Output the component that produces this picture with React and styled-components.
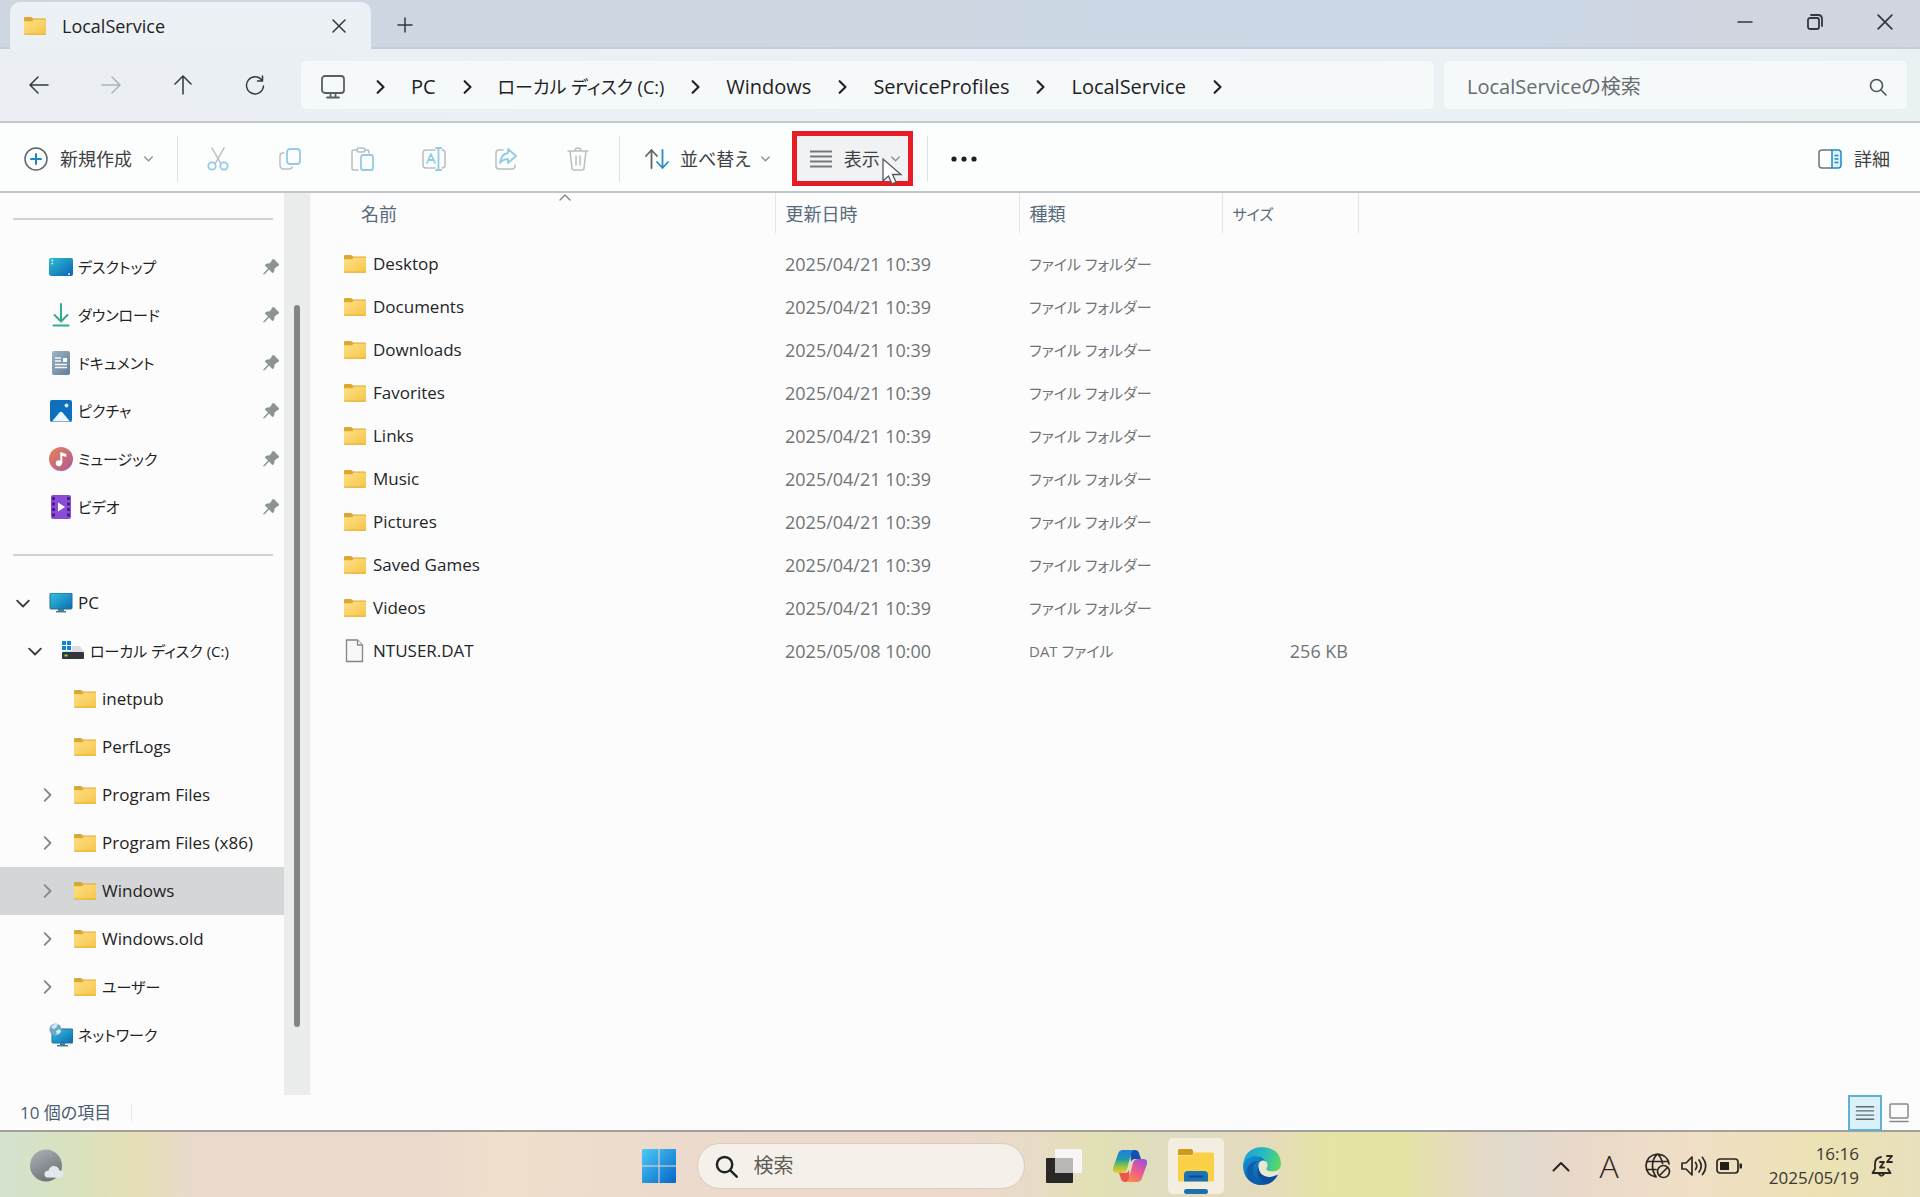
import React from "react";
import styled, { createGlobalStyle } from "styled-components";

const GlobalStyle = createGlobalStyle`
  * { box-sizing: border-box; }
  html, body { margin: 0; padding: 0; }
  body {
    font-family: "Open Sans", "Noto Sans CJK JP", sans-serif;
    font-feature-settings: "palt";
    color: #1f2224;
    background: #fcfcfc;
  }
  button, input {
    font: inherit;
    font-feature-settings: inherit;
    color: inherit;
    margin: 0;
    padding: 0;
    border: 0;
    background: none;
  }
  svg { display: block; flex: none; }
`;

/* ---------- icons ---------- */

const Stroke = ({ w = 24, h = w, box = `0 0 ${w} ${h}`, sw = 1.5, color = "currentColor", children }) => (
  <svg width={w} height={h} viewBox={box} fill="none" stroke={color} strokeWidth={sw} strokeLinecap="round" strokeLinejoin="round" aria-hidden="true">
    {children}
  </svg>
);

const Folder = ({ w = 24, h = 18 }) => (
  <svg width={w} height={h} viewBox="0 0 24 18" aria-hidden="true">
    <defs>
      <linearGradient id="folderFront" x1="0" y1="0" x2="1" y2="1">
        <stop offset="0" stopColor="#fee18a" />
        <stop offset="1" stopColor="#f6c445" />
      </linearGradient>
    </defs>
    <path d="M1 1.2Q1 0 2.2 0H8l2 1.500h12q1 0 1 1v3H1z" fill="#dba72f" />
    <path d="M1 4.200h8.2L10.600 2.400H22q1 0 1 1V17q0 1-1 1H2q-1 0-1-1z" fill="url(#folderFront)" />
    <path d="M1 16.200h22v.8q0 1-1 1H2q-1 0-1-1z" fill="#e5b23c" opacity=".6" />
  </svg>
);

const FileIcon = () => (
  <svg width="24" height="24" viewBox="0 0 24 24" fill="#f8f8f8" stroke="#858585" strokeWidth="1.300" strokeLinejoin="round" aria-hidden="true">
    <path d="M3.500 1h11l5 5v16.500h-16z" />
    <path d="M14.500 1v5h5" />
  </svg>
);

const DesktopIcon = () => (
  <svg width="24" height="20" viewBox="0 0 24 20" aria-hidden="true">
    <defs>
      <linearGradient id="desk" x1="0" y1="0" x2="1" y2="1">
        <stop offset="0" stopColor="#2fbfd0" />
        <stop offset="1" stopColor="#0a62b8" />
      </linearGradient>
    </defs>
    <rect y="1" width="24" height="18" rx="2" fill="url(#desk)" />
    <path d="M2.500 3.500h1.600M2.500 6.500h1.600M19 17h2" stroke="#d8f5fb" strokeWidth="1.500" />
  </svg>
);

const DownloadIcon = () => (
  <Stroke w={24} sw={2} color="#35ab93">
    <path d="M12 1v17M5.500 12l6.500 6.500L18.500 12M4.500 22.500h15" />
  </Stroke>
);

const DocumentIcon = () => (
  <svg width="24" height="24" viewBox="0 0 24 24" aria-hidden="true">
    <defs>
      <linearGradient id="doc" x1="0" y1="0" x2="1" y2="1">
        <stop offset="0" stopColor="#9db4c6" />
        <stop offset="1" stopColor="#657e98" />
      </linearGradient>
    </defs>
    <rect x="3" width="18" height="24" rx="2" fill="url(#doc)" />
    <path d="M6 7h6M6 10h6M6 13.500h12M6 16.500h12" stroke="#f2f6fa" strokeWidth="1.300" />
    <rect x="14" y="7" width="4" height="4" fill="#fff" />
  </svg>
);

const PictureIcon = () => (
  <svg width="24" height="24" viewBox="0 0 24 24" aria-hidden="true">
    <rect x="1" y="1" width="22" height="22" rx="2" fill="#0d6fbd" />
    <path d="M3 22.500l7.500-9q1.500-1.700 3 0l7.500 9z" fill="#eef7fd" />
    <circle cx="17.500" cy="6.500" r="2" fill="#c9e8fb" />
  </svg>
);

const MusicIcon = () => (
  <svg width="24" height="24" viewBox="0 0 24 24" aria-hidden="true">
    <defs>
      <linearGradient id="music" x1="0" y1="0" x2="1" y2="1">
        <stop offset="0" stopColor="#e58455" />
        <stop offset="1" stopColor="#b0579a" />
      </linearGradient>
    </defs>
    <circle cx="12" cy="12" r="12" fill="url(#music)" />
    <circle cx="9.800" cy="16.300" r="3" fill="#fff" />
    <path d="M11.300 16.500V5l6 2v3l-4-1.200v7.700z" fill="#fff" />
  </svg>
);

const VideoIcon = () => (
  <svg width="24" height="24" viewBox="0 0 24 24" aria-hidden="true">
    <rect x="2" width="20" height="24" rx="2" fill="#8b4bd6" />
    <path d="M4.500 2v20M19.500 2v20" stroke="#3b1a77" strokeWidth="2.600" strokeDasharray="3 2.500" />
    <path d="M9 7.500l7 4.500-7 4.500z" fill="#fff" />
  </svg>
);

const PcIcon = () => (
  <svg width="24" height="20" viewBox="0 0 24 20" aria-hidden="true">
    <defs>
      <linearGradient id="pc" x1="0" y1="0" x2="1" y2="1">
        <stop offset="0" stopColor="#35c3dc" />
        <stop offset="1" stopColor="#0a6cb4" />
      </linearGradient>
    </defs>
    <rect x="1" width="22" height="16" rx="1" fill="url(#pc)" stroke="#1f6f96" />
    <path d="M9 16h6v2H9zM7 18h10v1.500H7z" fill="#4b7b93" />
  </svg>
);

const DriveIcon = () => (
  <svg width="24" height="20" viewBox="0 0 24 20" aria-hidden="true">
    <path d="M1 0h4v4H1zM6 0h4v4H6zM1 5h4v4H1zM6 5h4v4H6z" fill="#0b86d3" />
    <path d="M11 5h8l4 6H2V9.500h9z" fill="#dcdfe2" />
    <rect x="1" y="11" width="22" height="7" rx="1" fill="#33373b" />
    <rect x="3.500" y="13.500" width="3" height="2" fill="#7fe04a" />
  </svg>
);

const NetworkIcon = () => (
  <svg width="24" height="24" viewBox="0 0 24 24" aria-hidden="true">
    <rect x="3" y="6" width="21" height="14" rx="1" fill="url(#pc)" stroke="#1f6f96" />
    <path d="M11 20h5v2h-5zM8 22h11v1.500H8z" fill="#4b7b93" />
    <circle cx="6.500" cy="6.500" r="6" fill="#6aa9c9" />
    <path d="M2 4q3-4 7-3l-2 4-3 1zM7 8l4-2 1 3-4 3z" fill="#d4e8f0" />
  </svg>
);

const PinIcon = () => (
  <svg width="16" height="16" viewBox="0 0 16 16" aria-hidden="true">
    <path d="M9.600.6q.7-.7 1.400 0l4.400 4.400q.7.7 0 1.400-.8.700-1.800.8l-2.500 2.500q.4 2.600-1.400 4.200L6 10.200 1.200 15.200.5 14.800 5.400 9.600 2 6.300q1.600-1.800 4.200-1.400l2.500-2.500Q8.800 1.300 9.600.6z" fill="#8b9396" stroke="#8b9396" strokeWidth=".8" />
  </svg>
);

const Chevron = ({ dir = "right", size = 12, color, sw = 1.8 }) => {
  const d = { right: "M4 1l5 5-5 5", down: "M1 4l5 5 5-5", up: "M1 9l5-5 5 5" }[dir];
  return (
    <Stroke w={size} box="0 0 12 12" sw={sw} color={color}>
      <path d={d} />
    </Stroke>
  );
};

const CloseX = ({ size = 14 }) => (
  <Stroke w={size} box="0 0 14 14"><path d="M1 1l12 12M13 1L1 13" /></Stroke>
);

const SearchGlyph = ({ size = 18, sw = 1.6 }) => (
  <Stroke w={size} box="0 0 18 18" sw={sw}><circle cx="7.500" cy="7.500" r="6" /><path d="M12 12l5 5" /></Stroke>
);

const GREY = "#b9bec1";
const SKY = "#94cbe4";

const CutIcon = () => (
  <Stroke w={24} color={GREY}>
    <path d="M6 1l8.500 15M18 1L9.500 16" />
    <g stroke={SKY} strokeWidth="1.800"><circle cx="6" cy="19" r="3.700" /><circle cx="18" cy="19" r="3.700" /></g>
  </Stroke>
);
const CopyIcon = () => (
  <Stroke w={24} color={GREY}>
    <path d="M6 6H5Q2 6 2 9v9q0 4 4 4h5q3 0 3-2" />
    <rect x="9" y="2" width="13" height="15" rx="3" stroke={SKY} strokeWidth="1.800" />
  </Stroke>
);
const PasteIcon = () => (
  <Stroke w={24} color={GREY}>
    <path d="M7 3H4Q2 3 2 5v16q0 2 2 2h4M15 3h2q2 0 2 2v1" />
    <rect x="7" y="1" width="8" height="4" rx="2" />
    <rect x="11" y="8" width="12" height="15" rx="2" stroke={SKY} strokeWidth="1.800" />
  </Stroke>
);
const RenameIcon = () => (
  <Stroke w={24} color={GREY}>
    <path d="M13 3H4Q1 3 1 6v12q0 3 3 3h9M20 3q3 0 3 3v12q0 3-3 3" />
    <g stroke={SKY} strokeWidth="1.800"><path d="M16.500 1v22M14 1h5M14 23h5M5 16l4-9 4 9M6.500 13h5" /></g>
  </Stroke>
);
const ShareIcon = () => (
  <Stroke w={24} color={GREY}>
    <path d="M9 3H5Q2 3 2 6v13q0 3 3 3h13q3 0 3-3v-1" />
    <path d="M14 2l8 7-8 7v-4q-5 0-8 4 1-9 8-10z" stroke={SKY} strokeWidth="1.800" />
  </Stroke>
);
const TrashIcon = () => (
  <Stroke w={24} color={GREY}>
    <path d="M2 4h20M4 4l2 17q0 2 2 2h8q2 0 2-2l2-17M9 4q0-3 3-3t3 3M10 9v9M14 9v9" />
  </Stroke>
);
const NewIcon = () => (
  <Stroke w={24} color="#5e6468">
    <circle cx="12" cy="12" r="11" />
    <path d="M12 7v10M7 12h10" stroke="#1b86c6" strokeWidth="2" />
  </Stroke>
);
const SortIcon = () => (
  <Stroke w={26} h={22} sw={1.800} color="#5e6468">
    <path d="M7.500 20V2M2 8l5.500-6L13 8" />
    <path d="M18.500 2v18M13 14l5.500 6 5.500-6" stroke="#2a8fc9" />
  </Stroke>
);
const LinesIcon = ({ w = 24, color = "#74787b", sw = 1.800 }) => (
  <Stroke w={w} h={18} box="0 0 24 18" color={color} sw={sw}>
    <path d="M1 1.500h22M1 6.500h22M1 11.500h22M1 16.500h22" strokeLinecap="butt" />
  </Stroke>
);
const DetailsIcon = () => (
  <svg width="24" height="20" viewBox="0 0 24 20" fill="none" strokeWidth="1.500" aria-hidden="true">
    <path d="M14 1H4Q1 1 1 4v12q0 3 3 3h10" stroke="#6e7477" />
    <path d="M14 1h6q3 0 3 3v12q0 3-3 3h-6z" fill="#def3fc" stroke="#2189c2" />
    <path d="M16.500 6.500h4M16.500 10h4M16.500 13.500h4" stroke="#2189c2" />
  </svg>
);
const MonitorIcon = () => (
  <Stroke w={24} color="#5a5e61" sw={1.8}>
    <rect x="1" y="1" width="22" height="17" rx="3" />
    <path d="M9.500 18v4M14.500 18v4M6 22.500h12" />
  </Stroke>
);

const StartIcon = () => (
  <svg width="34" height="34" viewBox="0 0 34 34" aria-hidden="true">
    <defs>
      <linearGradient id="start" x1="0" y1="0" x2="1" y2="1" >
        <stop offset="0" stopColor="#4dc9f5" />
        <stop offset="1" stopColor="#0566c8" />
      </linearGradient>
    </defs>
    <path d="M1 0h15.500v16.500H0V1q0-1 1-1zM17.500 0H33q1 0 1 1v15.500H17.500zM0 17.500h16.500V34H1q-1 0-1-1zM17.500 17.500H34V33q0 1-1 1H17.500z" fill="url(#start)" />
  </svg>
);
const TaskViewIcon = () => (
  <svg width="36" height="34" viewBox="0 0 36 34" aria-hidden="true">
    <rect y="9" width="27" height="25" rx="1" fill="#292827" />
    <rect x="9" y="0" width="27" height="24" rx="1" fill="#f7f6f5" />
    <rect x="9" y="9" width="18" height="15" fill="#b9b8b7" />
  </svg>
);
const CopilotIcon = () => (
  <svg width="34" height="32" viewBox="0 0 34 32" aria-hidden="true">
    <defs>
      <linearGradient id="copA" x1="0" y1="0" x2="0" y2="1">
        <stop offset="0" stopColor="#1f7fe0" />
        <stop offset=".4" stopColor="#1c9aa8" />
        <stop offset=".7" stopColor="#8fc447" />
        <stop offset="1" stopColor="#f0c92f" />
      </linearGradient>
      <linearGradient id="copB" x1=".8" y1="0" x2=".2" y2="1">
        <stop offset="0" stopColor="#9a52dd" />
        <stop offset=".5" stopColor="#ee5a8e" />
        <stop offset="1" stopColor="#f9913d" />
      </linearGradient>
    </defs>
    <path d="M17 0h5q3 0 4 3l2 6h-6q-3 0-4 3z" fill="#1550b0" />
    <path d="M17 32h-5q-3 0-4-3l-2-6h6q3 0 4-3z" fill="#ef5350" />
    <path d="M10 0h12q-3 0-4 4l-4 15q-1 4-5 4H4q-5 0-4-5L5 4q1-4 5-4z" fill="url(#copA)" />
    <path d="M24 32H12q3 0 4-4l4-15q1-4 5-4h5q5 0 4 5l-5 14q-1 4-5 4z" fill="url(#copB)" />
  </svg>
);
const ExplorerIcon = () => (
  <svg width="36" height="34" viewBox="0 0 36 34" aria-hidden="true">
    <path d="M0 1.500Q0 0 1.500 0H13q2 0 2 2v4H0z" fill="#cf9a1c" />
    <path d="M0 6.500h13l3-3h18.500Q36 3.500 36 5v26q0 1.500-1.500 1.500h-33Q0 32.500 0 31z" fill="#fad046" />
    <path d="M6 32.500V26q0-4 4-4h16q4 0 4 4v6.500z" fill="#1a72b8" />
    <path d="M11 27.500h14" stroke="#0b4a8c" strokeWidth="2" />
  </svg>
);
const EdgeIcon = () => (
  <svg width="38" height="38" viewBox="0 0 38 38" aria-hidden="true">
    <defs>
      <linearGradient id="edgeTop" x1="0" y1=".3" x2="1" y2=".5">
        <stop offset="0" stopColor="#1a9fdc" />
        <stop offset=".6" stopColor="#2cc0b4" />
        <stop offset="1" stopColor="#5bd860" />
      </linearGradient>
      <linearGradient id="edgeLow" x1="0" y1="0" x2=".7" y2="1">
        <stop offset="0" stopColor="#1594dc" />
        <stop offset="1" stopColor="#0c4e9d" />
      </linearGradient>
    </defs>
    <path d="M0 19Q1 1 19 0q18 1 19 16 0 8-8 8.500h-9L12 12z" fill="url(#edgeTop)" />
    <path d="M0 19q3-10 12-10 8 0 11 6l1 14 11-1q-6 10-16 10Q1 37 0 19z" fill="url(#edgeLow)" />
    <path d="M15 14q-6 4-5 11 2 10 11 13-10 1-15-6-5-9 1-15 3-3 8-3z" fill="#0e5eab" />
    <path d="M15.500 20q-.5-5.500 4-6.500 5 0 5 4.500 0 2-1 3.500 0 2.500 4 3 5 .5 8-1-1 4-1.500 5-5 2.500-10 1.500-8-2-8.500-10z" fill="#ece6d2" />
    <path d="M15.500 20q0 7 7 9.500 6 1.500 12-2-5 8-13 8-9-5-6-15.500z" fill="#0c4e9d" />
  </svg>
);
const WeatherIcon = () => (
  <svg width="34" height="34" viewBox="0 0 34 34" aria-hidden="true">
    <defs>
      <linearGradient id="moon" x1="0" y1="0" x2=".5" y2="1">
        <stop offset="0" stopColor="#b0b3b6" />
        <stop offset="1" stopColor="#6f757b" />
      </linearGradient>
    </defs>
    <circle cx="16" cy="16.500" r="16" fill="url(#moon)" />
    <path d="M17 28.500q-3-1-2.500-4 .7-3 4-3 1.500-5 6-4.500 4 .5 5 4.500 4 .5 4 4-.3 3-4 3.200z" fill="#e4e8ec" />
  </svg>
);
const GlobeIcon = () => (
  <Stroke w={26} box="0 0 26 26" sw={1.7}>
    <path d="M11 24Q1 22 1 12.500 2 2 12.500 1 23 2 24 11M2.500 8.500h20.500M2 16.500h9M11 23.500Q7.500 19 7.500 12.500T12 1.500M13 1.500q4 4 4.500 9" />
    <circle cx="18.500" cy="18.500" r="6" /><path d="M14.500 22.500l8-8" />
  </Stroke>
);
const SpeakerIcon = () => (
  <Stroke w={26} h={22} sw={1.7}>
    <path d="M1 8h4l6-6v18l-6-6H1zM14.500 7.500q2.500 3.500 0 7M18 5q4.500 6 0 12M21.500 2.500q6.500 8.500 0 17" />
  </Stroke>
);
const BatteryIcon = () => (
  <svg width="26" height="16" viewBox="0 0 26 16" aria-hidden="true">
    <rect x="1" y="1" width="21" height="14" rx="3" fill="none" stroke="#2b2722" strokeWidth="1.700" />
    <rect x="4" y="4" width="9" height="8" fill="#221f1b" />
    <path d="M23.500 5.500h1.500q1 0 1 1v3q0 1-1 1h-1.500z" fill="#221f1b" />
  </svg>
);
const BellIcon = () => (
  <Stroke w={24} h={24} sw={1.8}>
    <path d="M11 3Q5 4 5 10v5l-2.500 4h18L18 15M9 20q2.500 3.500 5 0M10 8h4l-4 5.500h4M17 2h5l-5 6h5" />
  </Stroke>
);

/* ---------- window frame ---------- */

const Screen = styled.div`
  min-height: 100vh;
  display: flex;
  flex-direction: column;
`;

const TitleBar = styled.header`
  display: flex;
  align-items: flex-end;
  height: 49px;
  padding-left: 10px;
  border-bottom: 2px solid #c5ced8;
  background: linear-gradient(90deg, #ced7e1 0%, #ced8e2 45%, #ccd8e6 60%, #ccd8e7 80%, #d0d5e0 88%, #d1d6e1 100%);
`;

const Tab = styled.div`
  display: flex;
  align-items: center;
  width: 361px;
  height: 47px;
  margin-bottom: -2px;
  padding: 0 22px 0 13px;
  border-radius: 10px 10px 0 0;
  background: #ecf1f6;
  font-size: 18px;
  line-height: 24px;
  font-weight: 500;
  & > span { flex: 1; padding-left: 15px; }
`;

const PlainButton = styled.button`
  display: flex;
  align-items: center;
  justify-content: center;
  width: ${(p) => p.$w || 36}px;
  height: ${(p) => p.$h || 36}px;
  color: ${(p) => p.$color || "#33383c"};
`;

const NewTab = styled(PlainButton)`
  margin: 0 auto 4px 16px;
`;

const WindowButtons = styled.div`
  display: flex;
  align-self: flex-start;
`;

const NavBar = styled.div`
  display: flex;
  align-items: center;
  height: 74px;
  padding: 0 13px 0 3px;
  border-bottom: 2px solid #c3c9ce;
  background: linear-gradient(90deg, #ebeff4 0%, #ebf1f6 60%, #eaf1f3 100%);
`;

const AddressBar = styled.nav`
  display: flex;
  align-items: center;
  flex: 1;
  height: 48px;
  margin: 0 10px;
  padding: 3px 0 0 16px;
  border-radius: 5px;
  background: #f5f9f9;
  font-size: 20px;
  line-height: 28px;
`;

const Crumb = styled.button`
  font-size: ${(p) => (p.$kana ? 18 : 20)}px;
`;

const CrumbGap = styled.span`
  display: flex;
  justify-content: center;
  width: 62px;
`;

const SearchBox = styled.div`
  display: flex;
  align-items: center;
  width: 463px;
  height: 48px;
  padding: 3px 20px 0 23px;
  border-radius: 5px;
  background: #f5f9f9;
  color: #4b5053;
`;

const SearchInput = styled.input`
  flex: 1;
  min-width: 0;
  outline: 0;
  font-size: 20px;
  line-height: 28px;
  &::placeholder { color: ${(p) => p.$hint || "#666c6f"}; opacity: 1; }
`;

const Toolbar = styled.div`
  display: flex;
  align-items: center;
  height: 70px;
  padding: 3px 22px 0 16px;
  border-bottom: 2px solid #c1c6ca;
  background: #fcfdfd;
`;

const ToolButton = styled.button`
  position: relative;
  display: flex;
  align-items: center;
  gap: 12px;
  height: 48px;
  padding: 0 8px;
  font-size: 18px;
  line-height: 24px;
  color: #3d4144;
`;

const NewButton = styled(ToolButton)`
  padding-right: 24px;
`;

const SortButton = styled(ToolButton)`
  gap: 10px;
  padding: 0 8px 0 24px;
`;

const ViewButton = styled(ToolButton)`
  width: 121px;
  height: 55px;
  margin: 0 14px;
  padding: 0 0 0 12px;
  gap: 11px;
  border: 5px solid #e71c24;
  background: #f1f2f3;
`;

const Pointer = styled.svg`
  position: absolute;
  left: 85px;
  top: 22px;
`;

const Divider = styled.span`
  width: 1px;
  height: 46px;
  background: #dfe2e4;
`;

const IconSet = styled.div`
  display: flex;
  padding: 0 5px 0 4px;
`;

const Spacer = styled.span`
  flex: 1;
`;

/* ---------- side tree and file list ---------- */

const Body = styled.div`
  display: flex;
  flex: 1;
`;

const Tree = styled.nav`
  width: 284px;
  padding-top: 2px;
`;

const Rule = styled.div`
  display: flex;
  align-items: center;
  height: 48px;
  padding: 0 11px 0 13px;
  &::before { content: ""; flex: 1; height: 2px; background: #cfd3d5; }
`;

const TreeRow = styled.button`
  display: flex;
  align-items: center;
  width: 100%;
  height: 48px;
  padding: 0 5px 0 ${(p) => 10 + p.$level * 12}px;
  background: ${(p) => (p.$selected ? "#d5d6d7" : "transparent")};
  font-size: ${(p) => (p.$kana ? 15 : 17)}px;
  line-height: 24px;
  text-align: left;
  white-space: nowrap;
`;

const Arrow = styled.span`
  display: flex;
  justify-content: center;
  width: 26px;
  margin-right: 13px;
`;

const TreeLabel = styled.span`
  flex: 1;
  padding-left: 5px;
`;

const ScrollTrack = styled.div`
  width: 27px;
  padding: 112px 9px 68px 10px;
  border-right: 1px solid #f4f5f5;
  background: #ebecec;
`;

const ScrollThumb = styled.div`
  width: 6px;
  height: 100%;
  border-radius: 3px;
  background: #838585;
`;

const ListPane = styled.main`
  flex: 1;
  padding-left: 32px;
`;

const FileTable = styled.table`
  table-layout: fixed;
  width: 1015px;
  border-collapse: collapse;
  font-size: 18px;
  line-height: 24px;
  color: #707476;
`;

const HeadCell = styled.th`
  position: relative;
  height: 40px;
  padding: 2px 0 0 ${(p) => (p.$first ? 18 : 10)}px;
  border-right: 1px solid #e2e5e7;
  font-size: ${(p) => (p.$kana ? 15 : 18)}px;
  font-weight: 400;
  text-align: left;
  color: #566a7d;
`;

const SortMark = styled.span`
  position: absolute;
  left: 50%;
  top: -2px;
`;

const GapCell = styled.td`
  height: 9px;
  padding: 0;
`;

const Cell = styled.td`
  height: 43px;
  padding: 0 10px;
  font-size: ${(p) => (p.$kana ? 15 : 18)}px;
  text-align: ${(p) => (p.$right ? "right" : "left")};
`;

const NameCell = styled(Cell)`
  padding: 0;
  font-size: 17px;
  color: #232628;
`;

const NameInner = styled.span`
  display: flex;
  align-items: center;
  gap: 6px;
`;

const StatusBar = styled.footer`
  display: flex;
  align-items: center;
  height: 37px;
  padding: 0 4px 0 20px;
  border-bottom: 2px solid #a59f9a;
  font-size: 17px;
  line-height: 24px;
  color: #4a5d70;
`;

const StatusDivider = styled.span`
  width: 1px;
  height: 18px;
  margin-left: 20px;
  background: #e8eaeb;
`;

const ModeButton = styled(PlainButton)`
  width: 34px;
  height: 36px;
  border: 2px solid ${(p) => (p.$on ? "#5fb2d3" : "transparent")};
  background: ${(p) => (p.$on ? "#dbf1fa" : "none")};
`;

/* ---------- taskbar ---------- */

const TaskBar = styled.footer`
  display: grid;
  grid-template-columns: 1fr auto 1fr;
  align-items: center;
  height: 65px;
  padding-top: 3px;
  background: linear-gradient(90deg, #d4e2cf 0%, #d9e2be 4%, #e6dfb6 7%, #e9dacc 10%, #eadacd 22%, #f0dfcc 26%, #ecdacc 34%, #ecd9cc 50%, #e8dcc6 54%, #e2e0b4 57%, #dfdcc2 61%, #e5dbbd 66%, #e4e4a4 69%, #e4e3a4 73%, #e5d9c6 77%, #e0dace 79%, #ead8ca 82%, #f0dfc6 88%, #ece2b4 95%, #e8dfbd 100%);
`;

const TaskLeft = styled.div`
  padding-left: 30px;
`;

const TaskCenter = styled.div`
  display: flex;
  align-items: center;
`;

const TaskButton = styled(PlainButton)`
  position: relative;
  width: 56px;
  height: 56px;
  margin: 0 5px;
  border-radius: 5px;
  background: ${(p) => (p.$on ? "#f4eee1" : "none")};
`;

const Running = styled.span`
  position: absolute;
  left: 16px;
  bottom: 0;
  width: 24px;
  height: 5px;
  border-radius: 3px;
  background: #1f6fb0;
`;

const TaskSearch = styled.div`
  display: flex;
  align-items: center;
  gap: 16px;
  width: 328px;
  height: 46px;
  margin: 0 6px 0 5px;
  padding: 0 17px;
  border: 1px solid #d8cec2;
  border-radius: 23px;
  background: #f5f0e9;
`;

const Tray = styled.div`
  display: flex;
  align-items: center;
  justify-content: flex-end;
  padding-right: 26px;
  color: #2b2722;
`;

const TrayButton = styled(PlainButton)`
  width: ${(p) => p.$w || 36}px;
  color: #2b2722;
  font-size: 32px;
  line-height: 36px;
  font-weight: 300;
`;

const Clock = styled.button`
  display: block;
  width: 112px;
  margin-right: 11px;
  font-size: 17px;
  line-height: 24px;
  text-align: right;
  color: #3b3731;
`;

/* ---------- data ---------- */

const crumbs = [
  { name: "PC" },
  { name: "ローカル ディスク (C:)", kana: true },
  { name: "Windows" },
  { name: "ServiceProfiles" },
  { name: "LocalService" },
];

const quick = [
  ["デスクトップ", DesktopIcon],
  ["ダウンロード", DownloadIcon],
  ["ドキュメント", DocumentIcon],
  ["ピクチャ", PictureIcon],
  ["ミュージック", MusicIcon],
  ["ビデオ", VideoIcon],
];

const tree = [
  { name: "PC", level: 0, arrow: "down", icon: PcIcon },
  { name: "ローカル ディスク (C:)", level: 1, arrow: "down", icon: DriveIcon, kana: true },
  { name: "inetpub", level: 2 },
  { name: "PerfLogs", level: 2 },
  { name: "Program Files", level: 2, arrow: "right" },
  { name: "Program Files (x86)", level: 2, arrow: "right" },
  { name: "Windows", level: 2, arrow: "right", selected: true },
  { name: "Windows.old", level: 2, arrow: "right" },
  { name: "ユーザー", level: 2, arrow: "right", kana: true },
  { name: "ネットワーク", level: 0, icon: NetworkIcon, kana: true },
];

const columnWidths = [432, 244, 203, 136];

const files = [
  ...["Desktop", "Documents", "Downloads", "Favorites", "Links", "Music", "Pictures", "Saved Games", "Videos"].map((name) => ({
    name,
    date: "2025/04/21 10:39",
    type: "ファイル フォルダー",
    size: "",
  })),
  { name: "NTUSER.DAT", date: "2025/05/08 10:00", type: "DAT ファイル", size: "256 KB", file: true },
];

const editTools = [
  ["切り取り", CutIcon],
  ["コピー", CopyIcon],
  ["貼り付け", PasteIcon],
  ["名前の変更", RenameIcon],
  ["共有", ShareIcon],
  ["削除", TrashIcon],
];

export default function App() {
  return (
    <Screen>
      <GlobalStyle />
      <TitleBar>
        <Tab>
          <Folder />
          <span>LocalService</span>
          <PlainButton $w={20} aria-label="タブを閉じる"><CloseX size={14} /></PlainButton>
        </Tab>
        <NewTab aria-label="新しいタブ">
          <Stroke w={16}><path d="M8 1v14M1 8h14" /></Stroke>
        </NewTab>
        <WindowButtons>
          <PlainButton $w={70} $h={44} aria-label="最小化"><Stroke w={16}><path d="M1 8h14" /></Stroke></PlainButton>
          <PlainButton $w={70} $h={44} aria-label="元に戻す">
            <Stroke w={16} sw={1.8}><rect x="1" y="4" width="11" height="11" rx="2" /><path d="M4 1h7q4 0 4 4v7" /></Stroke>
          </PlainButton>
          <PlainButton $w={70} $h={44} aria-label="閉じる"><CloseX size={16} /></PlainButton>
        </WindowButtons>
      </TitleBar>

      <NavBar>
        <PlainButton $w={72} aria-label="戻る"><Stroke w={20}><path d="M19 10H1M9 2l-8 8 8 8" /></Stroke></PlainButton>
        <PlainButton $w={72} $color="#adb2b6" aria-label="進む"><Stroke w={20}><path d="M1 10h18M11 2l8 8-8 8" /></Stroke></PlainButton>
        <PlainButton $w={72} aria-label="上へ"><Stroke w={20}><path d="M10 19V1M2 9l8-8 8 8" /></Stroke></PlainButton>
        <PlainButton $w={72} aria-label="更新"><Stroke w={20}><path d="M17 5.500A8.500 8.500 0 1 0 18.500 11M17.500 1v5h-5" /></Stroke></PlainButton>
        <AddressBar aria-label="アドレス">
          <PlainButton $w={32} aria-label="場所"><MonitorIcon /></PlainButton>
          {crumbs.map(({ name, kana }) => (
            <React.Fragment key={name}>
              <CrumbGap><Chevron size={14} /></CrumbGap>
              <Crumb $kana={kana}>{name}</Crumb>
            </React.Fragment>
          ))}
          <CrumbGap><Chevron size={14} /></CrumbGap>
        </AddressBar>
        <SearchBox>
          <SearchInput type="text" aria-label="LocalServiceの検索" placeholder="LocalServiceの検索" />
          <SearchGlyph />
        </SearchBox>
      </NavBar>

      <Toolbar>
        <NewButton><NewIcon />新規作成<Chevron dir="down" size={9} color="#8a8f92" /></NewButton>
        <Divider />
        <IconSet>
          {editTools.map(([label, Icon]) => (
            <PlainButton key={label} $w={72} aria-label={label}><Icon /></PlainButton>
          ))}
        </IconSet>
        <Divider />
        <SortButton><SortIcon />並べ替え<Chevron dir="down" size={9} color="#8a8f92" /></SortButton>
        <ViewButton>
          <LinesIcon />表示<Chevron dir="down" size={9} color="#8a8f92" />
          <Pointer width="22" height="28" viewBox="0 0 22 28" aria-hidden="true">
            <path d="M1 1v22l5.500-5 3.500 8 4-2-3.500-7.500H19z" fill="#fff" stroke="#55585a" strokeWidth="1.300" />
          </Pointer>
        </ViewButton>
        <Divider />
        <PlainButton $w={72} aria-label="その他">
          <svg width="26" height="6" viewBox="0 0 26 6" aria-hidden="true"><g fill="#1d1f21"><circle cx="3" cy="3" r="2.600" /><circle cx="13" cy="3" r="2.600" /><circle cx="23" cy="3" r="2.600" /></g></svg>
        </PlainButton>
        <Spacer />
        <ToolButton><DetailsIcon />詳細</ToolButton>
      </Toolbar>

      <Body>
        <Tree aria-label="ナビゲーション">
          <Rule />
          {quick.map(([name, Icon]) => (
            <TreeRow key={name} $level={0} $kana>
              <Arrow /><Icon /><TreeLabel>{name}</TreeLabel><PinIcon />
            </TreeRow>
          ))}
          <Rule />
          {tree.map(({ name, level, arrow, icon: Icon = Folder, selected, kana }) => (
            <TreeRow key={name} $level={level} $selected={selected} $kana={kana}>
              <Arrow>{arrow && <Chevron dir={arrow} size={14} color={arrow === "down" ? "#3a3e41" : "#85898c"} sw={1.6} />}</Arrow>
              <Icon />
              <TreeLabel>{name}</TreeLabel>
            </TreeRow>
          ))}
        </Tree>
        <ScrollTrack><ScrollThumb /></ScrollTrack>
        <ListPane>
          <FileTable>
            <colgroup>
              {columnWidths.map((w) => <col key={w} width={w} />)}
            </colgroup>
            <thead>
              <tr>
                <HeadCell $first scope="col">名前<SortMark><Chevron dir="up" size={12} color="#7d8386" sw={1.3} /></SortMark></HeadCell>
                <HeadCell scope="col">更新日時</HeadCell>
                <HeadCell scope="col">種類</HeadCell>
                <HeadCell $kana scope="col">サイズ</HeadCell>
              </tr>
            </thead>
            <tbody>
              <tr><GapCell colSpan={4} /></tr>
              {files.map((f) => (
                <tr key={f.name}>
                  <NameCell><NameInner>{f.file ? <FileIcon /> : <Folder />}{f.name}</NameInner></NameCell>
                  <Cell>{f.date}</Cell>
                  <Cell $kana>{f.type}</Cell>
                  <Cell $right>{f.size}</Cell>
                </tr>
              ))}
            </tbody>
          </FileTable>
        </ListPane>
      </Body>

      <StatusBar>
        10 個の項目
        <StatusDivider />
        <Spacer />
        <ModeButton $on aria-label="詳細表示"><LinesIcon w={20} color="#5e6b73" sw={1.600} /></ModeButton>
        <ModeButton aria-label="大アイコン表示">
          <Stroke w={20} color="#84898c"><rect x="1" y="1" width="18" height="14" rx="1" /><path d="M1 18.500h18" /></Stroke>
        </ModeButton>
      </StatusBar>

      <TaskBar>
        <TaskLeft><PlainButton $w={34} aria-label="天気"><WeatherIcon /></PlainButton></TaskLeft>
        <TaskCenter>
          <TaskButton aria-label="スタート"><StartIcon /></TaskButton>
          <TaskSearch>
            <SearchGlyph size={23} sw={1.9} />
            <SearchInput type="text" aria-label="検索" placeholder="検索" $hint="#5f5b56" />
          </TaskSearch>
          <TaskButton aria-label="タスクビュー"><TaskViewIcon /></TaskButton>
          <TaskButton aria-label="Copilot"><CopilotIcon /></TaskButton>
          <TaskButton $on aria-label="エクスプローラー"><ExplorerIcon /><Running /></TaskButton>
          <TaskButton aria-label="Edge"><EdgeIcon /></TaskButton>
        </TaskCenter>
        <Tray>
          <TrayButton aria-label="隠れているアイコン"><Chevron dir="up" size={18} sw={1.4} /></TrayButton>
          <TrayButton $w={60}>A</TrayButton>
          <TrayButton $w={38} aria-label="ネットワーク"><GlobeIcon /></TrayButton>
          <TrayButton $w={34} aria-label="音量"><SpeakerIcon /></TrayButton>
          <TrayButton aria-label="バッテリー"><BatteryIcon /></TrayButton>
          <Clock>16:16<br />2025/05/19</Clock>
          <TrayButton $w={24} aria-label="通知"><BellIcon /></TrayButton>
        </Tray>
      </TaskBar>
    </Screen>
  );
}
